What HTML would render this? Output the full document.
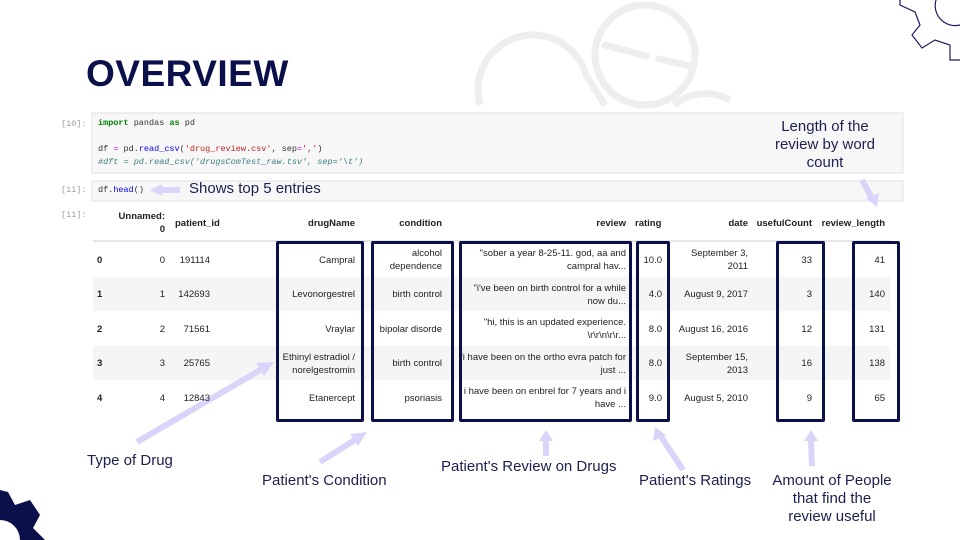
<!DOCTYPE html>
<html><head><meta charset="utf-8"><style>
body{margin:0;width:960px;height:540px;overflow:hidden;background:#fff;position:relative;font-family:"Liberation Sans",sans-serif}
.a{position:absolute;white-space:nowrap}
.mono{font-family:"Liberation Mono",monospace;font-size:8.5px;color:#333}
.pr{font-family:"Liberation Mono",monospace;font-size:8.5px;color:#999}
.lbl{font-family:"Liberation Sans",sans-serif;font-size:15px;color:#1c1f50}
.t{font-family:"Liberation Sans",sans-serif;font-size:9.5px;color:#222;position:absolute;text-align:right;line-height:13px}
.h{font-weight:bold}
.box{position:absolute;border:3px solid #0b0f4a;border-radius:2px;top:241px;height:175px}
</style></head><body>
<svg class="a" style="left:0;top:0" width="960" height="540">
 <g fill="none" stroke="#eeeeee" stroke-width="7">
  <path d="M480 105 A55 55 0 0 1 586 75 L605 105"/>
  <circle cx="645" cy="55" r="50"/>
  <path d="M674 105 A50 50 0 0 1 730 100"/>
 </g>
 <g stroke="#eeeeee" stroke-width="7" stroke-linecap="round"><line x1="605" y1="45" x2="646" y2="56"/><line x1="659" y1="59" x2="690" y2="66"/></g>
 <path d="M900 0 L900 5 L915 12 L920 25 L912 35 L922 48 L935 40 L950 45 L950 60 L960 60" fill="none" stroke="#1a1c5e" stroke-width="1.2"/>
 <path d="M960 25 A20 20 0 0 1 936 0" fill="none" stroke="#1a1c5e" stroke-width="1.2"/>
 <path d="M0 490 L8 492 L15 505 L30 500 L40 515 L33 528 L45 540 L0 540 Z" fill="#0b0f4a"/>
 <circle cx="0" cy="540" r="20" fill="#fff"/>
 <rect x="92" y="113" width="811" height="60" fill="#f7f7f7" stroke="#e0e0e0"/>
 <rect x="92" y="181" width="811" height="20" fill="#f7f7f7" stroke="#e0e0e0"/>
 <rect x="93" y="277" width="797" height="34" fill="#f5f5f5"/>
 <rect x="93" y="346" width="797" height="34" fill="#f5f5f5"/>
 <line x1="93" y1="241" x2="890" y2="241" stroke="#ccc"/>
 <g stroke="#d9d4fa" stroke-width="6">
  <line x1="137" y1="442" x2="262" y2="369"/>
  <line x1="320" y1="462" x2="358" y2="438"/>
  <line x1="546" y1="456" x2="546" y2="438"/>
  <line x1="683" y1="470" x2="660" y2="435"/>
  <line x1="812" y1="466" x2="811" y2="438"/>
  <line x1="862" y1="180" x2="872" y2="198"/>
  <line x1="180" y1="190" x2="160" y2="190"/>
 </g>
 <g fill="#d9d4fa">
  <polygon points="274,362 256,363 264,376"/>
  <polygon points="367,432 350,434 358,446"/>
  <polygon points="546,430 539,441 553,441"/>
  <polygon points="655,427 653,441 666,435"/>
  <polygon points="811,430 804,441 818,441"/>
  <polygon points="877,207 866,198 879,193"/>
  <polygon points="150,190 162,184 162,196"/>
 </g>
</svg>
<div class="a" style="left:86px;top:53px;font-size:37px;font-weight:900;color:#0b0f4a;letter-spacing:0.5px;font-family:'Liberation Sans',sans-serif">OVERVIEW</div>
<div class="a pr" style="left:61px;top:119px">[10]:</div>
<div class="a mono" style="left:98px;top:118px"><b style="color:#008000">import</b> pandas <b style="color:#008000">as</b> pd</div>
<div class="a mono" style="left:98px;top:144px">df <span style="color:#a2f">=</span> pd.<span style="color:#00f">read_csv</span>(<span style="color:#b22">'drug_review.csv'</span>, sep<span style="color:#a2f">=</span><span style="color:#b22">','</span>)</div>
<div class="a mono" style="left:98px;top:157px;color:#408080;font-style:italic">#dft = pd.read_csv('drugsComTest_raw.tsv', sep='\t')</div>
<div class="a pr" style="left:61px;top:185px">[11]:</div>
<div class="a mono" style="left:98px;top:185px">df.<span style="color:#00f">head</span>()</div>
<div class="a lbl" style="left:189px;top:180px">Shows top 5 entries</div>
<div class="a pr" style="left:61px;top:210px">[11]:</div>
<div class="t h" style="right:795px;top:210px">Unnamed:<br>0</div>
<div class="t h" style="left:175px;top:217px">patient_id</div>
<div class="t h" style="right:605px;top:217px">drugName</div>
<div class="t h" style="right:518px;top:217px">condition</div>
<div class="t h" style="right:334px;top:217px">review</div>
<div class="t h" style="left:635px;top:217px">rating</div>
<div class="t h" style="right:212px;top:217px">date</div>
<div class="t h" style="right:148px;top:217px">usefulCount</div>
<div class="t h" style="right:75px;top:217px">review_length</div>
<div id="rows"></div>
<script>
var R=[["0","0","191114","Campral","alcohol<br>dependence","\"sober a year 8-25-11. god, aa and<br>campral hav...","10.0","September 3,<br>2011","33","41"],
["1","1","142693","Levonorgestrel","birth control","\"i've been on birth control for a while<br>now du...","4.0","August 9, 2017","3","140"],
["2","2","71561","Vraylar","bipolar disorde","\"hi, this is an updated experience.<br>\\r\\r\\n\\r\\r...","8.0","August 16, 2016","12","131"],
["3","3","25765","Ethinyl estradiol /<br>norelgestromin","birth control","\"i have been on the ortho evra patch for<br>just ...","8.0","September 15,<br>2013","16","138"],
["4","4","12843","Etanercept","psoriasis","i have been on enbrel for 7 years and i<br>have ...","9.0","August 5, 2010","9","65"]];
var rt=[165,210,355,442,626,662,748,812,885],h="";
R.forEach(function(r,i){var c=260+i*34.5;
h+='<div class="t h" style="left:97px;top:'+(c-6.5)+'px">'+r[0]+'</div>';
for(var j=1;j<10;j++){var two=r[j].indexOf("<br>")>=0;h+='<div class="t" style="white-space:nowrap;right:'+(960-rt[j-1])+'px;top:'+(c-(two?13:6.5))+'px">'+r[j]+'</div>';}});
document.getElementById("rows").innerHTML=h;
</script>
<div class="box" style="left:276px;width:82px"></div>
<div class="box" style="left:371px;width:77px"></div>
<div class="box" style="left:459px;width:167px"></div>
<div class="box" style="left:636px;width:28px"></div>
<div class="box" style="left:776px;width:43px"></div>
<div class="box" style="left:852px;width:42px"></div>
<div class="a lbl" style="left:87px;top:452px">Type of Drug</div>
<div class="a lbl" style="left:262px;top:472px">Patient's Condition</div>
<div class="a lbl" style="left:441px;top:458px">Patient's Review on Drugs</div>
<div class="a lbl" style="left:639px;top:472px">Patient's Ratings</div>
<div class="a lbl" style="left:762px;top:472px;width:140px;text-align:center;line-height:18px">Amount of People<br>that find the<br>review useful</div>
<div class="a lbl" style="left:762px;top:118px;width:126px;text-align:center;line-height:18px">Length of the<br>review by word<br>count</div>
</body></html>
